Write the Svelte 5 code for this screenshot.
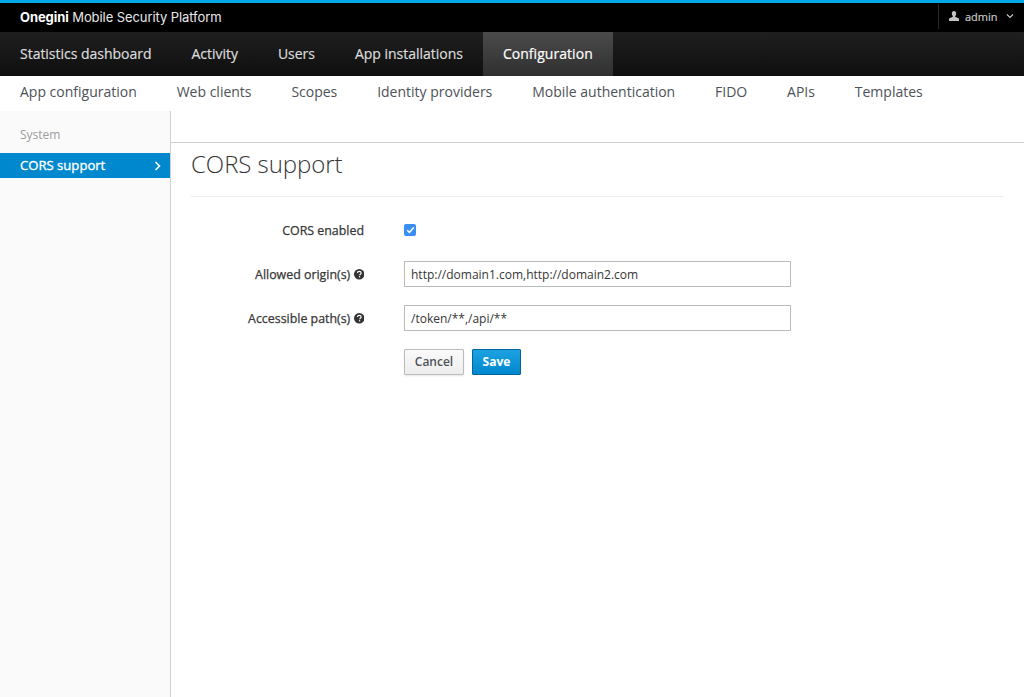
<script>
  const mainNav = ['Statistics dashboard', 'Activity', 'Users', 'App installations', 'Configuration'];
  const subNav = ['App configuration', 'Web clients', 'Scopes', 'Identity providers', 'Mobile authentication', 'FIDO', 'APIs', 'Templates'];
</script>

<div class="page">
  <header class="topbar">
    <div class="brand"><b>Onegini</b> Mobile Security Platform</div>
    <div class="user">
      <svg class="user-icon" width="10" height="10" viewBox="0 0 10 10"><path d="M5 0C3.6 0 2.8 1 2.8 2.4c0 1 .4 2 1 2.6v.8L.6 7.2C.2 7.4 0 7.7 0 8.1V10h10V8.1c0-.4-.2-.7-.6-.9L6.200 5.800V5c.6-.6 1-1.600 1-2.600C7.200 1 6.400 0 5 0z" fill="#c4c4c4"/></svg>
      <span>admin</span>
      <svg class="caret" width="8" height="6" viewBox="0 0 8 6"><path d="M1 1.500l3 3 3-3" fill="none" stroke="#c4c4c4" stroke-width="1.200"/></svg>
    </div>
  </header>

  <nav class="mainnav">
    {#each mainNav as item, i}
      <a class="main-item" class:active={i === 4} href="#top">{item}</a>
    {/each}
  </nav>

  <nav class="subnav">
    {#each subNav as item}
      <a class="sub-item" href="#top">{item}</a>
    {/each}
  </nav>

  <div class="body">
    <aside class="sidebar">
      <div class="side-title">System</div>
      <a class="side-item" href="#top">
        <span>CORS support</span>
        <svg width="7" height="10" viewBox="0 0 7 10"><path d="M1.500 1l4 4-4 4" fill="none" stroke="#fff" stroke-width="1.600"/></svg>
      </a>
    </aside>

    <main class="content">
      <div class="content-top"></div>
      <div class="inner">
        <h1>CORS support</h1>
        <form class="form">
          <div class="row check-row">
            <span class="label">CORS enabled</span>
            <span class="checkbox">
              <svg width="9" height="8" viewBox="0 0 9 8"><path d="M1.200 4.200l2.200 2.200 4.300-5" fill="none" stroke="#fff" stroke-width="1.500"/></svg>
            </span>
          </div>
          <div class="row">
            <span class="label">Allowed origin(s)
              {@render help()}
            </span>
            <input class="input" type="text" value="http://domain1.com,http://domain2.com" />
          </div>
          <div class="row">
            <span class="label">Accessible path(s)
              {@render help()}
            </span>
            <input class="input" type="text" value="/token/**,/api/**" />
          </div>
          <div class="actions">
            <button type="button" class="btn cancel">Cancel</button>
            <button type="button" class="btn save">Save</button>
          </div>
        </form>
      </div>
    </main>
  </div>
</div>

{#snippet help()}
  <svg class="help" width="10.500" height="10.500" viewBox="0 0 10 10">
    <circle cx="5" cy="5" r="5" fill="#333"/>
    <path d="M3.300 3.900c0-1 .8-1.700 1.800-1.700s1.700.6 1.700 1.500c0 1.300-1.400 1.200-1.400 2.300" fill="none" stroke="#fff" stroke-width="1.100"/>
    <rect x="4.700" y="6.800" width="1.200" height="1.200" fill="#fff"/>
  </svg>
{/snippet}

<style>
  :global(body) {
    margin: 0;
    background: #fff;
    font-family: "Open Sans", sans-serif;
    color: #363636;
  }
  .page {
    height: 697px;
    display: flex;
    flex-direction: column;
    overflow: hidden;
  }
  a {
    text-decoration: none;
  }
  .topbar {
    height: 29px;
    flex: none;
    background: #000;
    border-top: 3px solid #00a8e6;
    display: flex;
    justify-content: space-between;
    align-items: center;
  }
  .brand {
    padding: 0 0 2px 20px;
    font-family: Inter, "Liberation Sans", sans-serif;
    font-size: 13px;
    color: #e8e8e8;
    letter-spacing: -0.08px;
  }
  .brand b {
    color: #fff;
    font-weight: 700;
  }
  .user {
    height: 25px;
    width: 86px;
    box-sizing: border-box;
    border-left: 1px solid #2a2a2a;
    display: flex;
    align-items: center;
    padding-left: 10px;
    font-size: 11px;
    font-weight: 400;
    -webkit-text-stroke: 0.2px currentColor;
    color: #c8c8c8;
    margin-bottom: 3px;
  }
  .user span {
    margin-left: 6px;
  }
  .caret {
    margin-left: 8px;
  }
  .mainnav {
    height: 44px;
    flex: none;
    display: flex;
    background: linear-gradient(#1f1f1f, #0f0f0f);
  }
  .main-item {
    padding: 0 20px;
    line-height: 44px;
    font-size: 14px;
    font-weight: 400;
    letter-spacing: -0.02px;
    color: #dcdcdc;
    -webkit-text-stroke: 0.2px currentColor;
  }
  .main-item.active {
    background: linear-gradient(#4b4b4b, #2f2f2f);
    color: #fff;
    letter-spacing: 0.05px;
  }
  .subnav {
    height: 35px;
    flex: none;
    display: flex;
    gap: 39.85px;
    padding-left: 20px;
    align-items: center;
    padding-bottom: 4px;
    box-sizing: border-box;
  }
  .sub-item {
    font-size: 14px;
    color: #4d5258;
  }
  .body {
    flex: 1;
    display: flex;
  }
  .sidebar {
    width: 170px;
    flex: none;
    background: #fafafa;
    border-right: 1px solid #d1d1d1;
  }
  .side-title {
    height: 42px;
    box-sizing: border-box;
    padding: 15px 0 0 20px;
    font-size: 12px;
    line-height: 17px;
    color: #9c9c9c;
  }
  .side-item {
    height: 25px;
    display: flex;
    justify-content: space-between;
    align-items: center;
    padding: 0 9px 0 20px;
    background: #0088ce;
    color: #fff;
    font-size: 13.1px;
    font-weight: 400;
    -webkit-text-stroke: 0.35px currentColor;
  }
  .side-item span {
    position: relative;
    top: -1px;
  }
  .content {
    flex: 1;
    min-width: 0;
  }
  .content-top {
    height: 31px;
    border-bottom: 1px solid #d1d1d1;
  }
  .inner {
    padding: 0 20px;
  }
  h1 {
    margin: 0;
    height: 53px;
    border-bottom: 1px solid #ededed;
    font-size: 24px;
    font-weight: 300;
    line-height: 42px;
    letter-spacing: -0.05px;
    color: #363636;
  }
  .form {
    padding-top: 20px;
    display: flex;
    flex-direction: column;
  }
  .row {
    display: flex;
    align-items: center;
    gap: 40px;
    height: 26px;
    margin-bottom: 18px;
  }
  .check-row {
    height: 26px;
    margin-bottom: 18px;
  }
  .label {
    width: 173px;
    flex: none;
    text-align: right;
    font-size: 12.4px;
    font-weight: 400;
    color: #363636;
    -webkit-text-stroke: 0.25px currentColor;
  }
  .help {
    vertical-align: -1px;
    margin-left: 0;
  }
  .checkbox {
    width: 12px;
    height: 12px;
    border-radius: 2px;
    background: #3b8ff3;
    display: flex;
    align-items: center;
    justify-content: center;
  }
  .input {
    width: 387px;
    height: 26px;
    box-sizing: border-box;
    border: 1px solid #bbb;
    padding: 0 6px;
    font: 12px "Open Sans", sans-serif;
    color: #363636;
    background: #fff;
    outline: none;
  }
  .actions {
    padding-left: 213px;
    display: flex;
    gap: 8px;
  }
  .btn {
    height: 26px;
    padding: 0 0 2px;
    border-radius: 1px;
    font: 600 12px "Open Sans", sans-serif;
  }
  .cancel {
    width: 60px;
    color: #4d5258;
    background: linear-gradient(#fafafa, #ededed);
    border: 1px solid #bbb;
    box-shadow: 0 1px 2px rgba(0, 0, 0, 0.1);
  }
  .save {
    width: 49px;
    color: #fff;
    background: linear-gradient(#1da1e0, #0088ce);
    border: 1px solid #00659c;
    font-weight: 700;
  }
</style>
